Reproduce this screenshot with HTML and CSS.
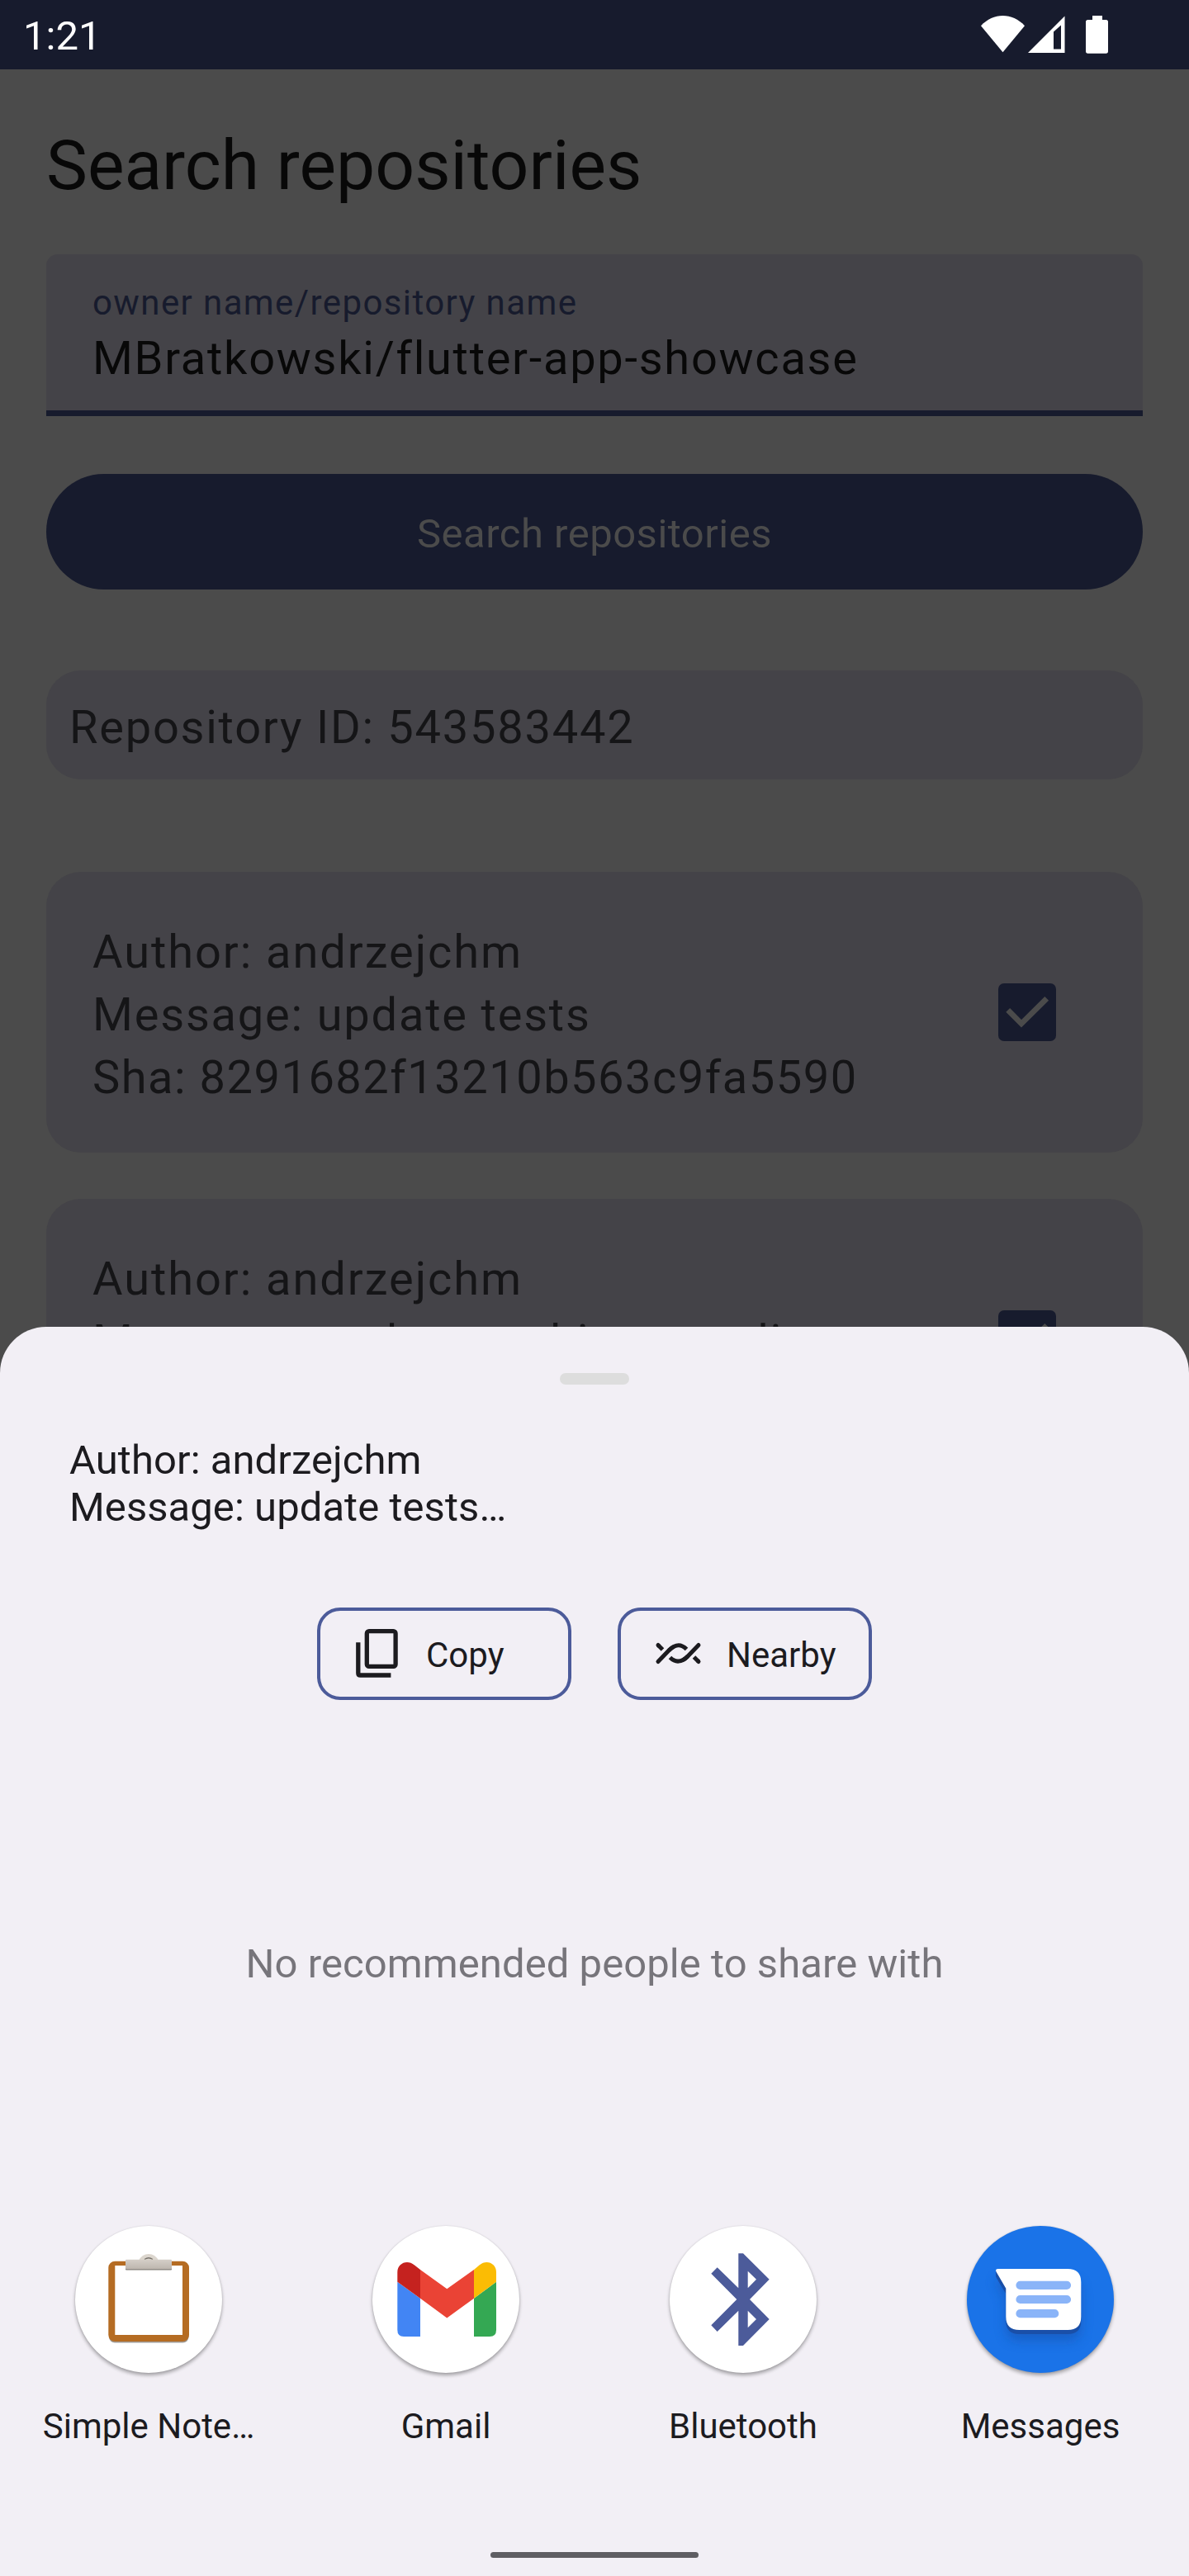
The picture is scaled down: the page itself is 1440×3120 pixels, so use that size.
FILE: index.html
```html
<!DOCTYPE html>
<html lang="en">
<head>
<meta charset="utf-8">
<title>Search repositories</title>
<link rel="stylesheet" href="styles.css">
</head>
<body>
<div class="phone">
  <header class="status">
    <span class="clock">1:21</span>
    <div class="status-icons">
      <svg class="wifi" width="53" height="46" viewBox="0 0 53 46"><path d="M26.5 44.3 0 12.3C15-4 38-4 53 12.3Z" fill="#fff"/></svg>
      <svg class="signal" width="45" height="46" viewBox="0 0 45 46"><path fill-rule="evenodd" d="M0 45 44.5.5V45ZM31 19.500V40.500H40V11.500Z" fill="#fff"/></svg>
      <svg class="battery" width="27" height="46" viewBox="0 0 27 46"><path d="M8 0H20V5H24.500Q27 5 27 7.500V43Q27 45.700 24.500 45.700H2.500Q0 45.700 0 43V7.500Q0 5 2.500 5H8Z" fill="#fff"/></svg>
    </div>
  </header>

  <main class="page">
    <h1 class="title">Search repositories</h1>
    <div class="field">
      <div class="field-label">owner name/repository name</div>
      <div class="field-value">MBratkowski/flutter-app-showcase</div>
    </div>
    <div class="search-button">Search repositories</div>
    <div class="repo-card">Repository ID: 543583442</div>
    <div class="commits">
      <article class="commit">
        <div class="commit-text">
          <div class="author">Author: andrzejchm</div>
          <div>Message: update tests</div>
          <div class="sha">Sha: 8291682f13210b563c9fa5590</div>
        </div>
        <svg class="checkbox" width="70" height="70" viewBox="0 0 70 70"><rect width="70" height="70" rx="7" fill="#171b2d"/><path d="M11.700 32.400 28 48.800 58.700 18.300" fill="none" stroke="#4b4b4b" stroke-width="6.800"/></svg>
      </article>
      <article class="commit">
        <div class="commit-text">
          <div class="author">Author: andrzejchm</div>
          <div>Message: update architecture linter</div>
        </div>
        <svg class="checkbox" width="70" height="70" viewBox="0 0 70 70"><rect width="70" height="70" rx="7" fill="#171b2d"/><path d="M11.700 32.400 28 48.800 58.700 18.300" fill="none" stroke="#4b4b4b" stroke-width="6.800"/></svg>
      </article>
    </div>
  </main>

  <section class="sheet">
    <div class="handle"></div>
    <p class="preview">Author: andrzejchm<br>Message: update tests…</p>
    <div class="chips">
      <div class="chip">
        <svg width="64" height="64" viewBox="0 0 64 64" fill="none" stroke="#1c1b1f" stroke-width="5.300"><rect x="18.300" y="4.700" width="34.800" height="42.700" rx="2.700"/><path d="M7.800 18.300V55.400Q7.800 58 10.400 58H47.400"/></svg>
        <span>Copy</span>
      </div>
      <div class="chip">
        <svg width="64" height="64" viewBox="0 0 64 64" fill="none" stroke="#1c1b1f" stroke-width="5"><path stroke-linecap="round" d="M7 41.500 20 28Q23 25 25 24M56 21.500 43 35Q40 38 38 39M7 21.500 7.500 22M56 41.500 55.500 41"/><path d="M20 28Q31.500 16.500 41.500 26.500M43 35Q31.500 46.500 21.500 36.500M7 21.500 12.500 27M56 41.500 50.500 36"/></svg>
        <span>Nearby</span>
      </div>
    </div>
    <p class="empty">No recommended people to share with</p>
    <div class="targets">
      <div class="target">
        <svg class="target-icon" width="178" height="178" viewBox="0 0 178 178">
          <defs><linearGradient id="clip" x2="0" y2="1"><stop stop-color="#d5cfc8"/><stop offset="1" stop-color="#bdb6ae"/></linearGradient></defs>
          <rect x="41" y="44.500" width="96.500" height="97" rx="7" fill="#77726c" opacity=".7"/>
          <rect x="40.300" y="42.700" width="97.700" height="97.300" rx="8" fill="#b56c23"/>
          <rect x="48.300" y="48" width="81.700" height="84" fill="#fff"/>
          <path d="M77 42Q81 34 89 34T101 42Z" fill="#dcd6ce"/>
          <path d="M84 40.500Q89 37 94 40.500" fill="none" stroke="#77726c" stroke-width="1.300"/>
          <rect x="61" y="42" width="56" height="11.500" rx="1" fill="#85807a"/>
          <rect x="61" y="40.700" width="56" height="11.500" rx="1" fill="url(#clip)"/>
        </svg>
        <span>Simple Note…</span>
      </div>
      <div class="target">
        <svg class="target-icon" width="178" height="178" viewBox="0 0 178 178">
          <path d="M30.300 67.700 58 87.700V134H38Q30.300 134 30.300 126Z" fill="#4285f4"/>
          <path d="M150 67.700 123 87.700V134H142Q150 134 150 126Z" fill="#34a853"/>
          <path d="M58 53 90.300 76.300 123 53V87.700L90.300 111.500 58 87.700Z" fill="#ea4335"/>
          <path d="M30.300 67.700V56C30.300 45.500 42 40 51 47.500L58 53V87.700Z" fill="#c5221f"/>
          <path d="M150 67.700V56C150 45.500 138.500 40 129.500 47.500L123 53V87.700Z" fill="#fbbc04"/>
        </svg>
        <span>Gmail</span>
      </div>
      <div class="target">
        <svg class="target-icon" width="178" height="178" viewBox="0 0 178 178"><path fill-rule="evenodd" fill="#4c5b9a" d="M83.300 33.300H89L120.700 64.700 97 89 120.700 113 89 145H83.300V102.700L57.700 128 50.300 120.300 81.300 89 50.300 57.700 57.700 50.300 83.300 75.300ZM94.700 54.700V75.300L105 64.700ZM94.700 102.700V123.300L105 113Z"/></svg>
        <span>Bluetooth</span>
      </div>
      <div class="target">
        <svg class="target-icon messages" width="178" height="178" viewBox="0 0 178 178">
          <defs>
            <filter id="soft" x="-30%" y="-30%" width="160%" height="180%"><feGaussianBlur stdDeviation="7"/></filter>
            <path id="bubble" d="M37.500 52H122Q138.300 52 138.300 68V110Q138.300 126 122 126H63.500Q47.300 126 47.300 110V75.700L35.500 55.500Q34 52 37.500 52Z"/>
          </defs>
          <use href="#bubble" y="13" fill="#174ea6" opacity=".5" filter="url(#soft)"/>
          <path d="M35 54V61Q36 64 47.300 82V115Q47.300 131 63.500 131H122Q138.300 131 138.300 115V105L60 60Z" fill="#1a4fa8"/>
          <use href="#bubble" fill="#fff"/>
          <path d="M64.500 71.800H121M64.500 89H121M64.500 106.200H106.200" fill="none" stroke="#8ab4f8" stroke-width="10.200" stroke-linecap="round"/>
        </svg>
        <span>Messages</span>
      </div>
    </div>
    <div class="nav-pill"></div>
  </section>
</div>
</body>
</html>
```
FILE: styles.css
```css
* { box-sizing: border-box; }
body {
  margin: 0;
  font-family: Roboto, "Liberation Sans", sans-serif;
  color: #1c1b1f;
}
h1, p { margin: 0; font-weight: 400; }
svg { display: block; flex: none; }

.phone {
  position: relative;
  width: 1440px;
  height: 3120px;
  overflow: hidden;
  background: #4b4b4b;
}

.status {
  height: 84px;
  padding: 0 98px 0 28px;
  display: flex;
  justify-content: space-between;
  background: #171b2d;
  color: #fff;
}
.clock { font-size: 49px; line-height: 88px; }
.status-icons { display: flex; padding-top: 19px; }
.signal { margin-left: 4px; }
.battery { margin-left: 25px; }

.page { padding: 67px 56px 0; }
.title {
  font-size: 84px;
  line-height: 100px;
  color: #080808;
}
.field {
  height: 196px;
  margin-top: 57px;
  padding: 34px 56px 0;
  border-radius: 14px 14px 0 0;
  background: linear-gradient(#171b2d, #171b2d) bottom / 100% 7px no-repeat #444348;
}
.field-label {
  font-size: 42px;
  line-height: 50px;
  letter-spacing: 1.4px;
  color: #171b2d;
}
.field-value {
  margin-top: 9px;
  font-size: 56px;
  line-height: 66px;
  letter-spacing: 1.72px;
  color: #080808;
}
.search-button {
  height: 140px;
  margin-top: 70px;
  padding-top: 4px;
  border-radius: 70px;
  display: flex;
  align-items: center;
  justify-content: center;
  background: #171b2d;
  color: #4b4b4b;
  font-size: 49px;
  letter-spacing: .49px;
}
.repo-card {
  height: 132px;
  margin-top: 98px;
  padding: 6px 28px 0;
  border-radius: 42px;
  display: flex;
  align-items: center;
  background: #444348;
  color: #151517;
  font-size: 56px;
  letter-spacing: 1.75px;
}
.commits {
  margin-top: 112px;
  display: flex;
  flex-direction: column;
  gap: 56px;
}
.commit {
  height: 340px;
  padding: 0 105px 0 56px;
  border-radius: 42px;
  display: flex;
  align-items: center;
  justify-content: space-between;
  background: #444348;
}
.commit-text {
  align-self: flex-start;
  padding-top: 59px;
  color: #151517;
  font-size: 56px;
  line-height: 76px;
  letter-spacing: 1.8px;
}
.author { letter-spacing: 1.93px; }
.sha { letter-spacing: 1.5px; }

.sheet {
  position: absolute;
  left: 0;
  right: 0;
  bottom: 0;
  height: 1513px;
  padding-top: 56px;
  border-radius: 56px 56px 0 0;
  display: flex;
  flex-direction: column;
  align-items: center;
  background: #f2eff5;
}
.handle {
  width: 84px;
  height: 14px;
  border-radius: 7px;
  background: #dddddd;
}
.preview {
  align-self: stretch;
  margin-top: 63px;
  padding: 0 84px;
  font-size: 49px;
  line-height: 57px;
  letter-spacing: .06px;
}
.chips {
  margin-top: 93px;
  display: flex;
  gap: 56px;
}
.chip {
  width: 308px;
  height: 112px;
  padding-left: 38px;
  border: 4px solid #4c5b9a;
  border-radius: 28px;
  display: flex;
  align-items: center;
  gap: 26px;
  font-size: 42px;
}
.chip span { padding-top: 3px; }
.empty {
  margin-top: 291px;
  font-size: 49px;
  line-height: 57px;
  letter-spacing: .06px;
  color: #77757b;
}
.targets {
  align-self: stretch;
  margin-top: 289px;
  display: grid;
  grid-template-columns: repeat(4, 1fr);
}
.target {
  display: flex;
  flex-direction: column;
  align-items: center;
  gap: 40px;
  font-size: 42px;
  line-height: 50px;
}
.target-icon {
  border-radius: 50%;
  background: #fff;
  box-shadow: 0 3px 4px rgba(0, 0, 0, .32), 0 0 2px rgba(0, 0, 0, .12);
}
.messages { background: #1a73e8; }
.nav-pill {
  width: 252px;
  height: 7px;
  margin-top: 127px;
  border-radius: 4px;
  background: #5f5e63;
}
```
